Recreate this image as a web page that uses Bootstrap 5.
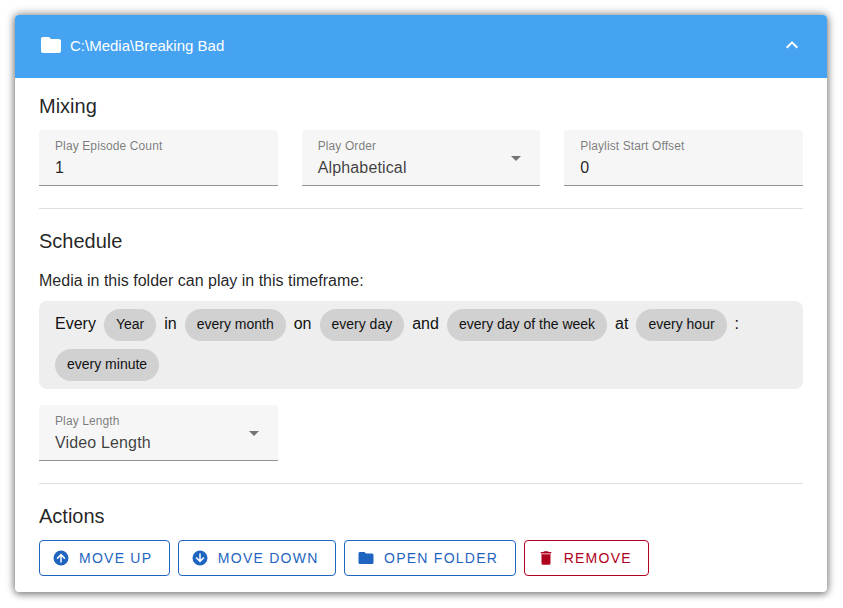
<!DOCTYPE html>
<html lang="en">
<head>
  <meta charset="UTF-8" />
  <meta name="viewport" content="width=device-width, initial-scale=1" />
  <title>Folder</title>
  <link href="https://cdn.jsdelivr.net/npm/bootstrap@5.3.3/dist/css/bootstrap.min.css" rel="stylesheet" />
  <style>
    html, body { height: 608px; }
    body {
      background-color: #fff;
      font-family: "Liberation Sans", Arial, sans-serif;
      color: rgba(0, 0, 0, .87);
      padding: 15px 16px 16px 15px;
      overflow: hidden;
    }
    .folder-panel {
      height: 577px;
      border-radius: 4px;
      background: #fff;
      box-shadow: 0 0 8px 1px rgba(0, 0, 0, .45), 0 3px 6px rgba(0, 0, 0, .2);
      overflow: hidden;
    }
    .panel-head {
      height: 63px;
      padding: 0 23px 0 24px;
      background-color: #45a3f2;
      color: #fff;
      font-size: 15px;
    }
    .panel-head svg { fill: #fff; margin-bottom: 3px; }
    .panel-head .folder-icon { margin-right: 7px; }
    .panel-body { padding: 16px 24px 0; }
    .sect-title {
      font-size: 20px;
      line-height: 24px;
      font-weight: 400;
      margin: 0;
    }
    .field-row {
      display: grid;
      grid-template-columns: repeat(3, 1fr);
      gap: 24px;
      margin-top: 12px;
    }
    .fill-field {
      height: 56px;
      padding: 9px 16px 0;
      background: #f6f6f6;
      border-bottom: 1px solid #949494;
      border-radius: 4px 4px 0 0;
      position: relative;
    }
    .field-label {
      font-size: 12px;
      line-height: 14px;
      letter-spacing: .11px;
      color: rgba(0, 0, 0, .52);
    }
    .field-value {
      font-size: 16px;
      line-height: 24px;
      letter-spacing: .15px;
      margin-top: 3px;
    }
    .field-value.is-select { color: rgba(0, 0, 0, .76); }
    .field-arrow {
      position: absolute;
      right: 12px;
      top: 16px;
      fill: #757575;
    }
    .sect-rule {
      margin: 22px 0 20px;
      border: 0;
      border-top: 1px solid #e0e0e0;
      opacity: 1;
    }
    .sched-intro { font-size: 16px; line-height: 24px; margin-top: 16px; }
    .sched-box {
      margin-top: 8px;
      padding: 8px 16px;
      height: 88px;
      background: #eee;
      border-radius: 8px;
      font-size: 16px;
      color: #111;
    }
    .sched-line { display: flex; align-items: center; height: 32px; gap: 8px; }
    .sched-line + .sched-line { margin-top: 8px; }
    .sched-line > span:not(.time-chip) { margin-top: -2px; }
    .time-chip {
      height: 32px;
      padding: 0 12px;
      border-radius: 16px;
      background: #d1d1d1;
      font-size: 14px;
      line-height: 30px;
      white-space: nowrap;
    }
    .action-row { display: flex; gap: 8px; margin-top: 12px; }
    .action-btn {
      display: flex;
      align-items: center;
      height: 36px;
      padding: 0 16.5px 0 12px;
      background: #fff;
      border: 1px solid #1f65c0;
      border-radius: 4px;
      color: #1f65c0;
      font-size: 14px;
      letter-spacing: 1.25px;
      line-height: 1;
      text-transform: uppercase;
    }
    .action-btn svg { fill: currentColor; margin-right: 9px; }
    .action-btn.is-danger { border-color: #b00020; color: #b00020; }
  </style>
</head>
<body>
  <div class="folder-panel">
    <div class="panel-head d-flex align-items-center justify-content-between">
      <div class="d-flex align-items-center">
        <svg class="folder-icon" width="24" height="24" viewBox="0 0 24 24"><path d="M10,4H4C2.89,4 2,4.89 2,6V18A2,2 0 0,0 4,20H20A2,2 0 0,0 22,18V8C22,6.89 21.1,6 20,6H12L10,4Z"/></svg>
        <span>C:\Media\Breaking Bad</span>
      </div>
      <svg width="24" height="24" viewBox="0 0 24 24"><path d="M7.41,15.41L12,10.83L16.59,15.41L18,14L12,8L6,14L7.41,15.41Z"/></svg>
    </div>

    <div class="panel-body">
      <h2 class="sect-title">Mixing</h2>
      <div class="field-row">
        <div class="fill-field">
          <div class="field-label">Play Episode Count</div>
          <div class="field-value">1</div>
        </div>
        <div class="fill-field">
          <div class="field-label">Play Order</div>
          <div class="field-value is-select">Alphabetical</div>
          <svg class="field-arrow" width="24" height="24" viewBox="0 0 24 24"><path d="M7,10L12,15L17,10H7Z"/></svg>
        </div>
        <div class="fill-field">
          <div class="field-label">Playlist Start Offset</div>
          <div class="field-value">0</div>
        </div>
      </div>

      <hr class="sect-rule" />

      <h2 class="sect-title">Schedule</h2>
      <div class="sched-intro">Media in this folder can play in this timeframe:</div>
      <div class="sched-box">
        <div class="sched-line">
          <span>Every</span><span class="time-chip">Year</span>
          <span>in</span><span class="time-chip">every month</span>
          <span>on</span><span class="time-chip">every day</span>
          <span>and</span><span class="time-chip">every day of the week</span>
          <span>at</span><span class="time-chip">every hour</span>
          <span>:</span>
        </div>
        <div class="sched-line">
          <span class="time-chip">every minute</span>
        </div>
      </div>

      <div class="field-row">
        <div class="fill-field mt-1">
          <div class="field-label">Play Length</div>
          <div class="field-value is-select">Video Length</div>
          <svg class="field-arrow" width="24" height="24" viewBox="0 0 24 24"><path d="M7,10L12,15L17,10H7Z"/></svg>
        </div>
      </div>

      <hr class="sect-rule" />

      <h2 class="sect-title">Actions</h2>
      <div class="action-row">
        <button type="button" class="action-btn">
          <svg width="18" height="18" viewBox="0 0 24 24"><path d="M13,18V10L16.5,13.5L17.92,12.08L12,6.16L6.08,12.08L7.5,13.5L11,10V18H13M12,2A10,10 0 0,1 22,12A10,10 0 0,1 12,22A10,10 0 0,1 2,12A10,10 0 0,1 12,2Z"/></svg>Move Up
        </button>
        <button type="button" class="action-btn">
          <svg width="18" height="18" viewBox="0 0 24 24"><path d="M11,6V14L7.5,10.5L6.08,11.92L12,17.84L17.92,11.92L16.5,10.5L13,14V6H11M12,22A10,10 0 0,1 2,12A10,10 0 0,1 12,2A10,10 0 0,1 22,12A10,10 0 0,1 12,22Z"/></svg>Move Down
        </button>
        <button type="button" class="action-btn">
          <svg width="18" height="18" viewBox="0 0 24 24"><path d="M10,4H4C2.89,4 2,4.89 2,6V18A2,2 0 0,0 4,20H20A2,2 0 0,0 22,18V8C22,6.89 21.1,6 20,6H12L10,4Z"/></svg>Open Folder
        </button>
        <button type="button" class="action-btn is-danger">
          <svg width="18" height="18" viewBox="0 0 24 24"><path d="M19,4H15.5L14.5,3H9.5L8.5,4H5V6H19M6,19A2,2 0 0,0 8,21H16A2,2 0 0,0 18,19V7H6V19Z"/></svg>Remove
        </button>
      </div>
    </div>
  </div>

  <script src="https://cdn.jsdelivr.net/npm/bootstrap@5.3.3/dist/js/bootstrap.bundle.min.js"></script>
</body>
</html>
